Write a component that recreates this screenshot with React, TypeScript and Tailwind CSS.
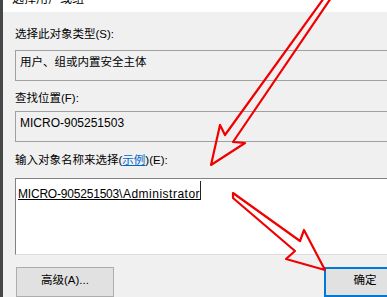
export default function App() {
  return (
    <div className="relative w-[387px] h-[297px] overflow-hidden flex bg-[#f0f0f0] text-black font-['Liberation_Sans','Noto_Sans_CJK_SC',sans-serif]">
      <div className="w-[3px] shrink-0 bg-[#474747]" />
      <div className="flex-1 min-w-0 flex flex-col">
        <div className="h-[12px] shrink-0 bg-white overflow-hidden pl-[9px]">
          <div className="text-[12px] leading-[16px] mt-[-9px]">选择用户或组</div>
        </div>
        <div className="flex-1 flex flex-col pl-[12px]">
          <div className="mt-[14px] text-[11.5px] leading-[16px]">选择此对象类型(S):</div>
          <div className="mt-[8px] h-[31px] border-y border-l border-[#a0a0a0] pl-[4px] pt-[3px] text-[11.5px] leading-[16px]">
            用户、组或内置安全主体
          </div>
          <div className="mt-[9px] text-[11.5px] leading-[16px]">查找位置(F):</div>
          <div className="mt-[5px] h-[31px] border-y border-l border-[#a0a0a0] pl-[4px] pt-[3px] text-[12px] leading-[16px]">
            MICRO-905251503
          </div>
          <div className="mt-[10px] text-[11.5px] leading-[16px]">
            输入对象名称来选择(<span className="text-[#0066cc] underline">示例</span>)(E):
          </div>
          <div className="mt-[10px] h-[77px] bg-white border-t border-l border-[#828282] border-b-[#dcdcdc] border-b pl-[2px] pt-[2px]">
            <div className="flex items-start">
              <span className="mt-[5px] text-[12px] leading-[16px] underline underline-offset-[1px]">
                <span className="tracking-[-0.2px]">MICRO-905251503</span>
                <span className="tracking-[0.5px]">\Administrator</span>
              </span>
              <div className="h-[19px] w-px bg-[#222]" />
            </div>
          </div>
          <div className="mt-[12px] flex items-start">
            <div className="ml-[1px] w-[98px] h-[30px] border border-[#adadad] bg-[#e1e1e1] pt-[4px] text-center text-[11.5px] leading-[16px]">
              高级(A)...
            </div>
            <div className="ml-auto mr-[-19px] w-[82px] h-[30px] border-2 border-[#0078d7] bg-[#e1e1e1] pt-[3px] text-center text-[11.5px] leading-[16px]">
              确定
            </div>
          </div>
        </div>
      </div>
      <svg className="pointer-events-none absolute inset-0" width="387" height="297" viewBox="0 0 387 297">
        <polygon
          points="324,-2 225,135 220,125 211,165 245,143 233,142 331,-2"
          fill="none"
          stroke="#f00000"
          strokeWidth="2.2"
          strokeLinejoin="round"
        />
        <polygon
          points="233,193 300,241 304,230 325,270 286,259 295,251 233,198"
          fill="none"
          stroke="#f00000"
          strokeWidth="2.2"
          strokeLinejoin="round"
        />
      </svg>
    </div>
  );
}
